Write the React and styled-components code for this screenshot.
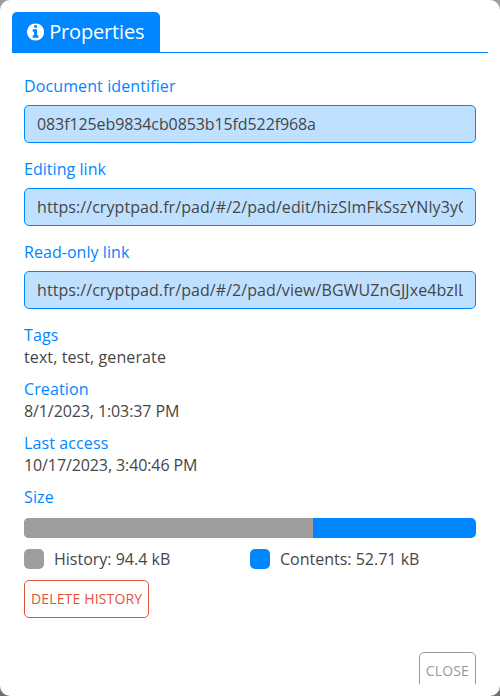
import React from "react";
import styled, { createGlobalStyle } from "styled-components";

const BLUE = "#0087ff";

const GlobalStyle = createGlobalStyle`
  *, *::before, *::after { box-sizing: border-box; }
  body {
    margin: 0;
    background: linear-gradient(#a09c9c, #707070);
    color: #464646;
    font: 400 16px/22px "Open Sans", sans-serif;
    overflow: hidden;
  }
`;

const Modal = styled.main`
  height: 696px;
  padding: 12px;
  background: #fff;
  border-radius: 10px;
  display: flex;
  flex-direction: column;
  overflow: hidden;
`;

const TabBar = styled.header`
  display: flex;
  flex: none;
  height: 41px;
  border-bottom: 1px solid ${BLUE};
`;

const Tab = styled.div`
  display: flex;
  align-items: center;
  gap: 5px;
  width: 148px;
  height: 40px;
  padding-left: 15px;
  background: ${BLUE};
  color: #fff;
  font-size: 20px;
  letter-spacing: -0.15px;
  border-radius: 5px 5px 0 0;
  white-space: nowrap;
`;

const Body = styled.section`
  padding: 22px 12px 0;
`;

const Label = styled.label`
  display: block;
  height: 22px;
  color: ${BLUE};
  letter-spacing: ${(p) => p.$tracking ?? 0.11}px;
`;

const Field = styled.div`
  margin-bottom: 10px;
`;

const Value = styled.div`
  height: 22px;
  letter-spacing: ${(p) => p.$tracking}px;
`;

const Input = styled.input`
  display: block;
  width: 100%;
  height: 38px;
  margin: 8px 0 15px;
  padding: 0 12px;
  border: 1px solid ${BLUE};
  border-radius: 5px;
  background: #bfe1ff;
  color: #464646;
  font: inherit;
  letter-spacing: ${(p) => p.$tracking}px;
  outline: none;
`;

const Bar = styled.div`
  display: flex;
  height: 20px;
  margin-top: 10px;
  border-radius: 5px;
  overflow: hidden;
  background: ${BLUE};
`;

const HistoryBar = styled.div`
  width: 64%;
  background: #9e9e9e;
`;

const Legend = styled.div`
  display: grid;
  grid-template-columns: 1fr 1fr;
  margin-top: 10px;
`;

const LegendItem = styled.div`
  display: flex;
  align-items: center;
  gap: 10px;
  height: 22px;
`;

const Swatch = styled.span`
  width: 20px;
  height: 20px;
  border-radius: 5px;
  background: ${(p) => p.$color};
`;

const Button = styled.button`
  display: flex;
  align-items: center;
  height: 38px;
  padding: 0 6px;
  border: 1px solid ${(p) => p.$color};
  border-radius: 5px;
  background: #fff;
  color: ${(p) => p.$color};
  font: 400 14px/20px "Open Sans", sans-serif;
  letter-spacing: 0.15px;
  text-transform: uppercase;
  white-space: nowrap;
`;

const DeleteRow = styled.div`
  display: flex;
  margin-top: 10px;
`;

const Footer = styled.footer`
  display: flex;
  justify-content: flex-end;
  height: 32px;
  margin: 34px 12px 0 0;
  overflow: hidden;
`;

const LINKS = [
  ["Document identifier", "083f125eb9834cb0853b15fd522f968a", 0.11, -0.1],
  ["Editing link", "https://cryptpad.fr/pad/#/2/pad/edit/hizSImFkSszYNly3yOQ", 0.05, 0.07],
  ["Read-only link", "https://cryptpad.fr/pad/#/2/pad/view/BGWUZnGJJxe4bzlLk", 0.05, 0.07],
];

const DETAILS = [
  ["Tags", "text, test, generate", 0.1],
  ["Creation", "8/1/2023, 1:03:37 PM", -0.1],
  ["Last access", "10/17/2023, 3:40:46 PM", -0.1],
];

function InfoIcon() {
  return (
    <svg width="17.14" height="20" viewBox="0 0 1536 1792" fill="#fff" aria-hidden="true">
      <path
        transform="translate(0 1536) scale(1 -1)"
        d="M1024 160v160q0 14 -9 23t-23 9h-96v512q0 14 -9 23t-23 9h-320q-14 0 -23 -9t-9 -23v-160q0 -14 9 -23t23 -9h96v-320h-96q-14 0 -23 -9t-9 -23v-160q0 -14 9 -23t23 -9h448q14 0 23 9t9 23zM896 1056v160q0 14 -9 23t-23 9h-192q-14 0 -23 -9t-9 -23v-160q0 -14 9 -23t23 -9h192q14 0 23 9t9 23zM1536 640q0 -209 -103 -385.5t-279.5 -279.5t-385.5 -103t-385.5 103t-279.5 279.5t-103 385.5t103 385.5t279.5 279.5t385.5 103t385.5 -103t279.5 -279.5t103 -385.5z"
      />
    </svg>
  );
}

export default function App() {
  return (
    <>
      <GlobalStyle />
      <Modal>
        <TabBar>
          <Tab><InfoIcon />Properties</Tab>
        </TabBar>
        <Body>
          {LINKS.map(([label, value, labelTracking, tracking]) => (
            <React.Fragment key={label}>
              <Label $tracking={labelTracking}>{label}</Label>
              <Input readOnly aria-label={label} value={value} $tracking={tracking} />
            </React.Fragment>
          ))}
          {DETAILS.map(([label, value, tracking]) => (
            <Field key={label}>
              <Label>{label}</Label>
              <Value $tracking={tracking}>{value}</Value>
            </Field>
          ))}
          <Label>Size</Label>
          <Bar><HistoryBar /></Bar>
          <Legend>
            <LegendItem><Swatch $color="#9e9e9e" />History: 94.4 kB</LegendItem>
            <LegendItem><Swatch $color={BLUE} />Contents: 52.71 kB</LegendItem>
          </Legend>
          <DeleteRow><Button $color="#e55236">Delete history</Button></DeleteRow>
        </Body>
        <Footer><Button $color="#999">Close</Button></Footer>
      </Modal>
    </>
  );
}
